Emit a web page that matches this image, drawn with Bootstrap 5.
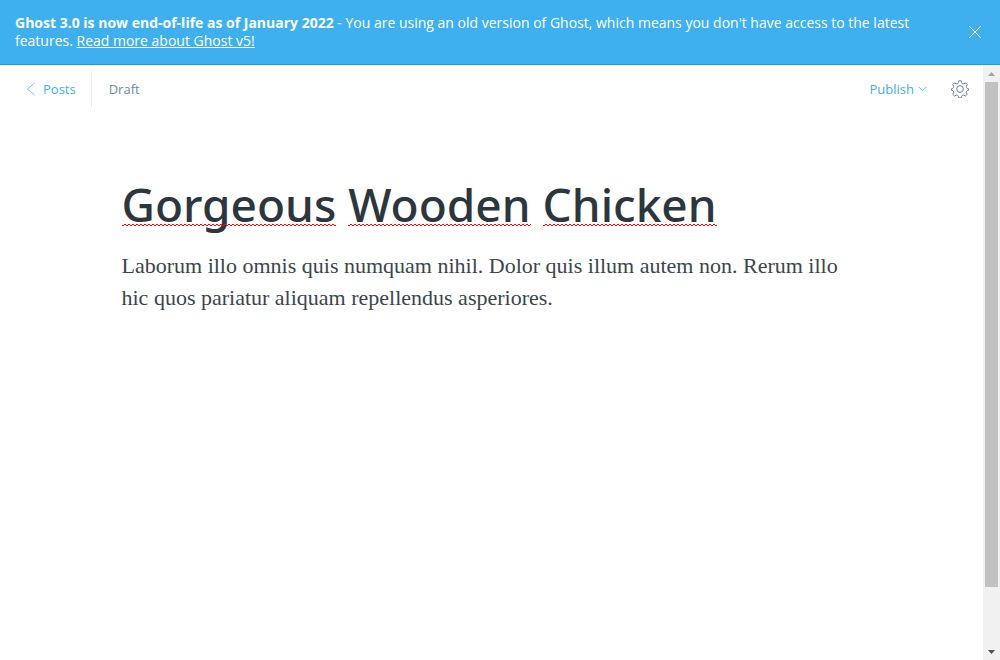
<!DOCTYPE html>
<html lang="en">
<head>
<meta charset="utf-8">
<meta name="viewport" content="width=device-width, initial-scale=1">
<title>Gorgeous Wooden Chicken - Ghost</title>
<link href="https://cdn.jsdelivr.net/npm/bootstrap@5.3.0/dist/css/bootstrap.min.css" rel="stylesheet">
<style>
  body { font-family: "Open Sans", "Noto Sans", sans-serif; font-size: 13px; line-height: 18px; color: #738a94; }
  .notice { background: #3eb0ef; border-bottom: 1px solid #139bed; padding: 14px 18px 14px 15px; min-height: 65px; font-size: 14px; }
  .notice-close { width: 14px; height: 14px; }
  .accent { color: #3eb0ef; }
  .editor-header { height: 48px; padding: 0 14px 0 26px; }
  .back-link { height: 36px; padding-right: 15px; border-right: 1px solid #e5eff5; gap: 7px; }
  .status { padding-left: 17px; }
  .header-actions { gap: 24px; }
  .post { max-width: 740px; margin: 0 auto; padding-top: 61px; }
  .post-title { font-family: "Noto Sans", sans-serif; font-size: 46px; line-height: 60px; font-weight: 500; color: #2c373d; margin-bottom: 16px; }
  .post-body { font-family: "Liberation Serif", serif; font-size: 22px; line-height: 32px; color: #3a464c; }
  .misspelt { position: relative; }
  .misspelt::after { content: ""; position: absolute; left: 0; right: 0; bottom: 9px; height: 2px;
    background: conic-gradient(#f00 25%, transparent 0 50%, #f00 0 75%, transparent 0) 0 0 / 4px 2px; }
  .scrollbar { width: 17px; background: #f1f1f1; }
  .scroll-thumb { width: 13px; height: 90%; background: #c1c1c1; }
  .scroll-arrow { height: 17px; }
</style>
</head>
<body class="d-flex flex-column vh-100 overflow-hidden bg-white">
  <aside class="notice d-flex align-items-start justify-content-between text-white flex-shrink-0">
    <p class="mb-0 me-5"><strong>Ghost 3.0 is now end-of-life as of January 2022</strong> - You are using an old version of Ghost, which means you don't have access to the latest features. <a href="#" class="text-white text-decoration-underline">Read more about Ghost v5!</a></p>
    <button type="button" class="notice-close btn p-0 border-0 text-white d-flex align-self-center" aria-label="Close notice">
      <svg width="14" height="14" viewBox="0 0 14 14" fill="none" stroke="currentColor"><path d="M1 1l12 12M13 1L1 13"/></svg>
    </button>
  </aside>
  <div class="d-flex flex-grow-1">
    <div class="flex-grow-1">
      <header class="editor-header d-flex align-items-center justify-content-between">
        <div class="d-flex align-items-center">
          <a href="#" class="back-link accent d-flex align-items-center text-decoration-none">
            <svg width="10" height="14" viewBox="0 0 10 14" fill="none" stroke="currentColor" stroke-width=".7"><path d="M8.5 1L1.5 7l7 6"/></svg>
            Posts
          </a>
          <span class="status">Draft</span>
        </div>
        <div class="header-actions d-flex align-items-center">
          <button type="button" class="publish-button accent border-0 bg-transparent p-0 d-flex align-items-center gap-1">Publish
            <svg width="9" height="6" viewBox="0 0 9 6" fill="none" stroke="currentColor" stroke-width=".9"><path d="M.5.8l4 4 4-4"/></svg>
          </button>
          <button type="button" class="btn p-0 border-0 d-flex" aria-label="Settings">
            <svg width="18" height="18" viewBox="0 0 24 24" fill="none" stroke="#657b85" stroke-width="1.3"><circle cx="12" cy="12" r="4.5"/><path d="M13.6 1.1l.6 2.4c.4 1.5 1.8 2.1 3.1 1.4l2.200-1.100 2.100 2.300-1 2.200c-.6 1.300.1 2.600 1.400 3l1.500.5v1.700l-1.500.5c-1.300.4-2 1.800-1.400 3l1 2.200-2.300 2.200-2-1.100c-1.300-.6-2.700.1-3.100 1.500l-.6 2.200h-3.200l-.6-2.200c-.4-1.400-1.800-2.100-3.100-1.500l-2 1.100-2.300-2.200 1-2.200c.6-1.200-.1-2.600-1.400-3L.5 13.500v-1.700l1.500-.5c1.300-.4 2-1.700 1.400-3l-1-2.200 2.100-2.300 2.200 1.100c1.300.7 2.700.1 3.100-1.400l.6-2.400z"/></svg>
          </button>
        </div>
      </header>
      <main class="post">
        <h1 class="post-title" contenteditable="true" spellcheck="false"><span class="misspelt">Gorgeous</span> <span class="misspelt">Wooden</span> <span class="misspelt">Chicken</span></h1>
        <p class="post-body mb-0" contenteditable="true" spellcheck="false">Laborum illo omnis quis numquam nihil. Dolor quis illum autem non. Rerum illo hic quos pariatur aliquam repellendus asperiores.</p>
      </main>
    </div>
    <div class="scrollbar d-flex flex-column align-items-center flex-shrink-0" aria-hidden="true">
      <div class="scroll-arrow d-flex align-items-center"><svg width="7" height="4" viewBox="0 0 7 4" fill="#a3a3a3"><path d="M3.500 0L7 4H0z"/></svg></div>
      <div class="flex-grow-1"><div class="scroll-thumb"></div></div>
      <div class="scroll-arrow d-flex align-items-center"><svg width="7" height="4" viewBox="0 0 7 4" fill="#505050"><path d="M3.500 4L7 0H0z"/></svg></div>
    </div>
  </div>
  <script src="https://cdn.jsdelivr.net/npm/bootstrap@5.3.0/dist/js/bootstrap.bundle.min.js"></script>
</body>
</html>
